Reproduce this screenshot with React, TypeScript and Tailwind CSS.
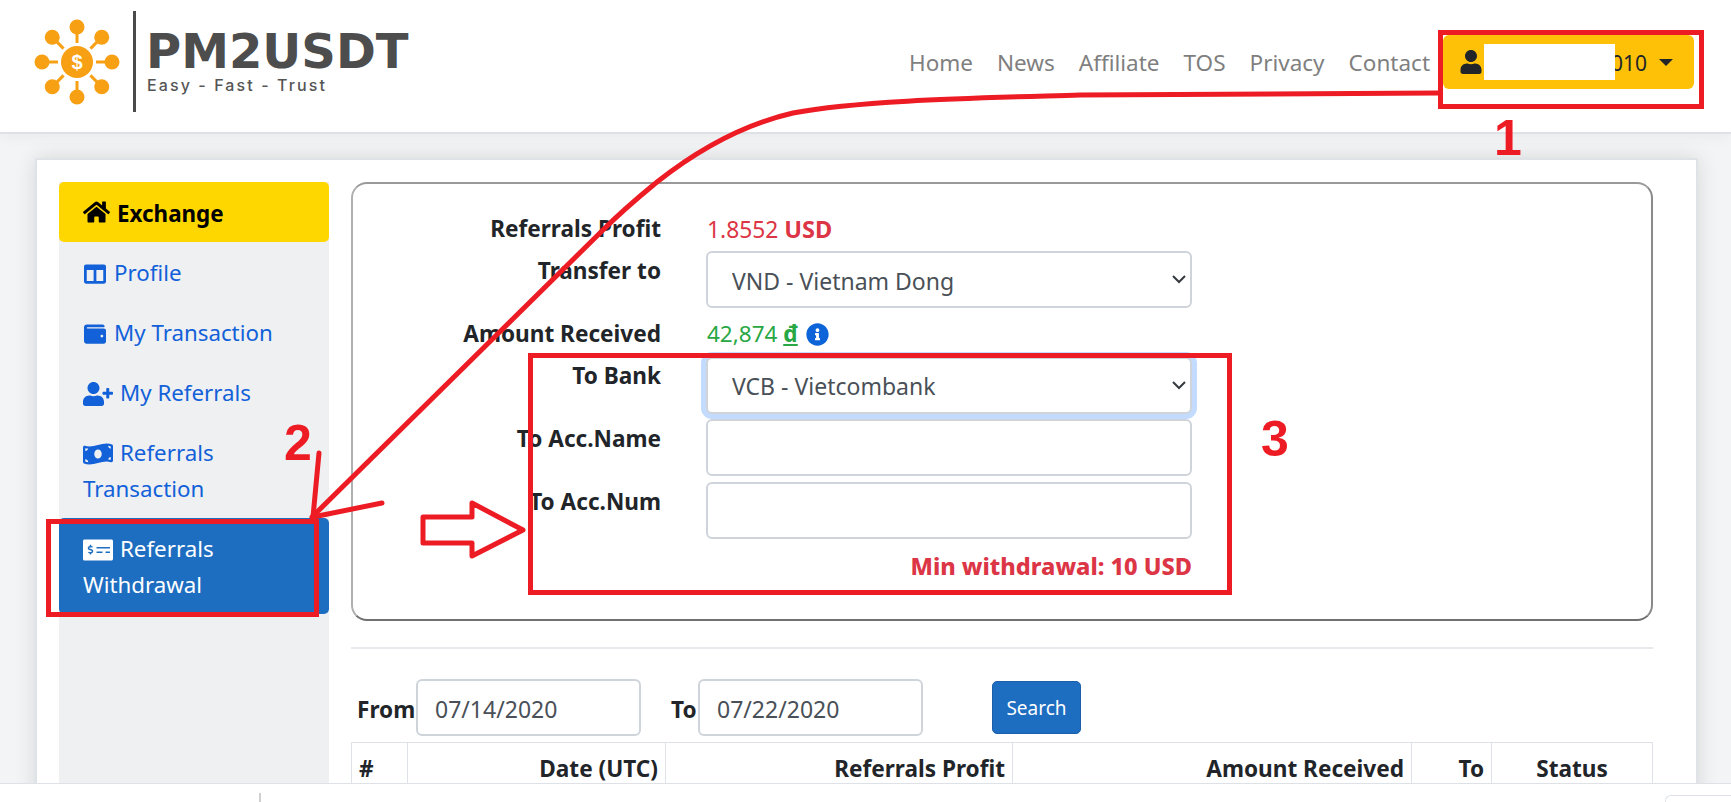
import React from "react";
import { FaHome, FaColumns, FaWallet, FaUserPlus, FaMoneyBillWave, FaMoneyCheckAlt, FaUser, FaInfoCircle } from "react-icons/fa";

const font = "font-['Noto_Sans',sans-serif]";

function Logo() {
  const nodes = [0, 45, 90, 135, 180, 225, 270, 315];
  return (
    <svg width="90" height="90" viewBox="0 0 90 90" className="shrink-0">
      <circle cx="45" cy="45" r="16" fill="#f7a014" />
      {nodes.map((a) => {
        const r = (a * Math.PI) / 180;
        const c = Math.cos(r);
        const s = Math.sin(r);
        return (
          <g key={a}>
            <line x1={45 + 19 * c} y1={45 + 19 * s} x2={45 + 33 * c} y2={45 + 33 * s} stroke="#f7a014" strokeWidth="3" />
            <circle cx={45 + 35 * c} cy={45 + 35 * s} r="7.5" fill="#f7a014" />
          </g>
        );
      })}
      <text x="45" y="52" textAnchor="middle" fontSize="20" fontWeight="700" fill="#fff" fontFamily="Liberation Sans, sans-serif">$</text>
    </svg>
  );
}

function Header() {
  const links = ["Home", "News", "Affiliate", "TOS", "Privacy", "Contact"];
  return (
    <header className="h-[134px] bg-white border-b-2 border-[#dee2e6] shadow-[0_2px_14px_rgba(0,0,0,0.05)] flex items-start relative z-10">
      <div className="flex items-center mt-[11px] ml-[32px] h-[101px]">
        <Logo />
        <div className="w-[3px] h-[101px] bg-[#4a4a4a] ml-[11px]" />
        <div className="ml-[10px] -mt-[3px] text-[#4d4d4d]">
          <div className="font-['DejaVu_Sans',sans-serif] text-[48px] leading-[50px] font-bold">PM2USDT</div>
          <div className="font-['Inter',sans-serif] text-[16px] leading-[18px] font-medium tracking-[2.1px] text-[#555] mt-0 ml-[1px]">Easy - Fast - Trust</div>
        </div>
      </div>
      <div className="ml-auto mt-[35px] mr-[37px] flex items-center">
        <nav className="flex items-center gap-[24px] mr-[13px] text-[#7f7f7f] text-[22.5px] pt-[2px]">
          {links.map((l) => (
            <span key={l}>{l}</span>
          ))}
        </nav>
        <div className="w-[251px] h-[54px] rounded-[6px] bg-[#ffc107] text-[#212529] flex items-center pl-[17px] text-[21px]">
          <FaUser className="w-[22px] h-[24px] shrink-0" />
          <div className="w-[131px] h-[36px] bg-white ml-[2px] relative z-10" />
          <span className="-ml-[4px] pt-[3px]">010</span>
          <span className="ml-[12px] w-0 h-0 border-x-[7px] border-x-transparent border-t-[7px] border-t-[#212529]" />
        </div>
      </div>
    </header>
  );
}

function Sidebar() {
  const linkClass = "px-[24px] pt-[13px] pb-[11px] leading-[36px] text-[#1261d9]";
  return (
    <aside className="w-[270px] shrink-0 bg-[#eff0f2] text-[22.3px] self-stretch">
      <div className="h-[60px] rounded-[5px] bg-[#ffd700] text-black font-bold flex items-center px-[24px] gap-[7px]">
        <FaHome className="w-[27px] h-[24px]" />
        <span className="text-[22.4px] pt-[3px]">Exchange</span>
      </div>
      <div className={linkClass}>
        <FaColumns className="inline w-[24px] h-[22px] mr-[7px] -mt-[3px]" />Profile
      </div>
      <div className={linkClass}>
        <FaWallet className="inline w-[24px] h-[22px] mr-[7px] -mt-[3px]" />My Transaction
      </div>
      <div className={linkClass}>
        <FaUserPlus className="inline w-[30px] h-[24px] mr-[7px] -mt-[3px]" />My Referrals
      </div>
      <div className={linkClass}>
        <FaMoneyBillWave className="inline w-[30px] h-[24px] mr-[7px] -mt-[3px]" />Referrals Transaction
      </div>
      <div className="px-[24px] pt-[13px] pb-[11px] leading-[36px] rounded-[5px] bg-[#1d6dc1] text-white">
        <FaMoneyCheckAlt className="inline w-[30px] h-[24px] mr-[7px] -mt-[3px]" />Referrals Withdrawal
      </div>
    </aside>
  );
}

const fieldClass =
  "block w-full h-[57px] rounded-[6px] border-2 border-[#ced4da] bg-white text-[#495057] text-[23px] px-[23px] outline-none";

function Chevron() {
  return (
    <svg width="16" height="10" viewBox="0 0 16 10" className="absolute right-[5px] top-[23px] pointer-events-none" fill="none">
      <polyline points="2,2 8,8 14,2" stroke="#343a40" strokeWidth="2" />
    </svg>
  );
}

function Row({
  label,
  children,
  className,
  labelClass = "-mt-[1px]",
}: {
  label: string;
  children: React.ReactNode;
  className: string;
  labelClass?: string;
}) {
  return (
    <div className={`flex ${className}`}>
      <div className={`w-[308px] shrink-0 text-right font-bold text-[#212529] text-[22.6px] leading-[36px] ${labelClass}`}>{label}</div>
      <div className="w-[486px] ml-[45px] leading-[36px]">{children}</div>
    </div>
  );
}

function FormPanel() {
  return (
    <section className="h-[439px] rounded-[16px] border-2 border-t-[#9a9a9a] border-l-[#b0b0b0] border-r-[#8a8a8a] border-b-[#707070] bg-white pt-[26px]">
      <Row label="Referrals Profit" className="" labelClass="mt-[1px]">
        <span className="block text-[#dc3545] text-[22.8px] ml-[1px] mt-[1px] -mb-[1px]">
          1.8552 <b className="text-[23.5px]">USD</b>
        </span>
      </Row>
      <Row label="Transfer to" className="mt-[7px]">
        <div className="relative -mt-[3px]">
          <select className={`${fieldClass} appearance-none pl-[24px] pt-[2px]`} defaultValue="VND - Vietnam Dong">
            <option>VND - Vietnam Dong</option>
          </select>
          <Chevron />
        </div>
      </Row>
      <Row label="Amount Received" className="mt-[9px]">
        <span className="text-[#28a745] text-[22.5px] flex items-center ml-[1px] -mt-[1px]">
          42,874&nbsp;<b className="underline">đ</b>
          <FaInfoCircle className="w-[23px] h-[23px] text-[#0d64d8] ml-[8px]" />
        </span>
      </Row>
      <Row label="To Bank" className="mt-[7px]">
        <div className="relative -mt-[2px]">
          <select
            className={`${fieldClass} appearance-none pl-[24px] border-[#86b7fe] shadow-[0_0_0_5px_rgba(13,110,253,0.25)]`}
            defaultValue="VCB - Vietcombank"
          >
            <option>VCB - Vietcombank</option>
          </select>
          <Chevron />
        </div>
      </Row>
      <Row label="To Acc.Name" className="mt-[7px]" labelClass="">
        <input className={`${fieldClass} -mt-[2px]`} readOnly />
      </Row>
      <Row label="To Acc.Num" className="mt-[8px]" labelClass="">
        <input className={`${fieldClass} -mt-[2px]`} readOnly />
      </Row>
      <div className="w-[839px] mt-[9px] text-right font-extrabold text-[#dc3545] text-[23.5px] leading-[36px]">
        Min withdrawal: 10 USD
      </div>
    </section>
  );
}

function Filter() {
  const input =
    "h-[57px] w-[225px] rounded-[6px] border-2 border-[#ced4da] bg-white text-[#495057] text-[23px] pl-[17px] pr-[10px] pt-[2px] outline-none";
  const label = "font-bold text-[#212529] text-[22.6px] pt-[5px]";
  return (
    <div className="flex items-center h-[57px] mt-[30px] pl-[6px]">
      <span className={`w-[59px] ${label}`}>From</span>
      <input className={input} value="07/14/2020" readOnly />
      <span className={`w-[27px] ml-[30px] ${label}`}>To</span>
      <input className={input} value="07/22/2020" readOnly />
      <button className="ml-[69px] w-[89px] h-[53px] rounded-[5px] bg-[#1d6dc1] border border-[#1a5fa8] text-white text-[19px] pt-[2px]">
        Search
      </button>
    </div>
  );
}

function ResultTable() {
  const th = "border border-[#dee2e6] font-bold text-[#212529] text-[22.6px] leading-[36px] px-[7px] pt-[8px] pb-[10px] align-top";
  return (
    <table className="table-fixed border-collapse w-[1301px] mt-[6px]">
      <colgroup>
        <col className="w-[56px]" />
        <col className="w-[258px]" />
        <col className="w-[347px]" />
        <col className="w-[399px]" />
        <col className="w-[80px]" />
        <col className="w-[161px]" />
      </colgroup>
      <thead>
        <tr>
          <th className={`${th} text-left`}>#</th>
          <th className={`${th} text-right`}>Date (UTC)</th>
          <th className={`${th} text-right`}>Referrals Profit</th>
          <th className={`${th} text-right`}>Amount Received</th>
          <th className={`${th} text-right`}>To</th>
          <th className={`${th} text-center`}>Status</th>
        </tr>
      </thead>
    </table>
  );
}

function Annotations() {
  const red = "#ed1c24";
  const num = "absolute font-['Liberation_Sans',sans-serif] font-bold text-[#ed1c24] text-[50px] leading-none";
  return (
    <>
      <svg width="1731" height="802" viewBox="0 0 1731 802" className="absolute inset-0 z-20 pointer-events-none" fill="none">
        <rect x="1440.5" y="32.5" width="261" height="74" stroke={red} strokeWidth="5" />
        <rect x="48.5" y="521.5" width="268" height="93" stroke={red} strokeWidth="5" />
        <rect x="530.5" y="355.5" width="699" height="237" stroke={red} strokeWidth="5" />
        <path
          d="M1438 93 L1080 95 C980 98 860 100 793 113 C745 124 700 148 657 182 C640 196 625 208 603 230 L312 517"
          stroke={red}
          strokeWidth="5"
          strokeLinejoin="round"
          strokeLinecap="round"
        />
        <polyline points="319,453 313,517 382,503" stroke={red} strokeWidth="5" strokeLinejoin="round" strokeLinecap="round" />
        <polygon points="423,517 472,517 472,503 523,530 472,556 472,543 423,543" stroke={red} strokeWidth="5" strokeLinejoin="round" fill="#fff" />
      </svg>
      <span className={`${num} z-20 left-[1494px] top-[113px]`}>1</span>
      <span className={`${num} z-20 left-[284px] top-[418px]`}>2</span>
      <span className={`${num} z-20 left-[1261px] top-[414px]`}>3</span>
    </>
  );
}

export default function App() {
  return (
    <div className={`relative w-[1731px] h-[802px] overflow-hidden bg-[#f3f4f6] ${font}`}>
      <Header />
      <main className="h-[649px] overflow-hidden pl-[35px] pt-[24px] pr-[33px]">
        <div className="h-[700px] bg-white border-2 border-[#dfe2e7] shadow-[0_0_20px_rgba(0,0,0,0.12)] pl-[22px] pt-[22px] flex">
          <Sidebar />
          <div className="ml-[22px] w-[1302px]">
            <FormPanel />
            <div className="h-[2px] bg-[#e7e9ec] mt-[26px]" />
            <Filter />
            <ResultTable />
          </div>
        </div>
      </main>
      <footer className="h-[19px] bg-white border-t border-[#dee2e6] relative z-10 flex items-end">
        <div className="ml-[259px] w-[2px] h-[9px] bg-[#d0d0d0]" />
        <div className="ml-auto w-[66px] h-[7px] rounded-tl-[6px] border-t border-l border-[#dee2e6]" />
      </footer>
      <Annotations />
    </div>
  );
}
